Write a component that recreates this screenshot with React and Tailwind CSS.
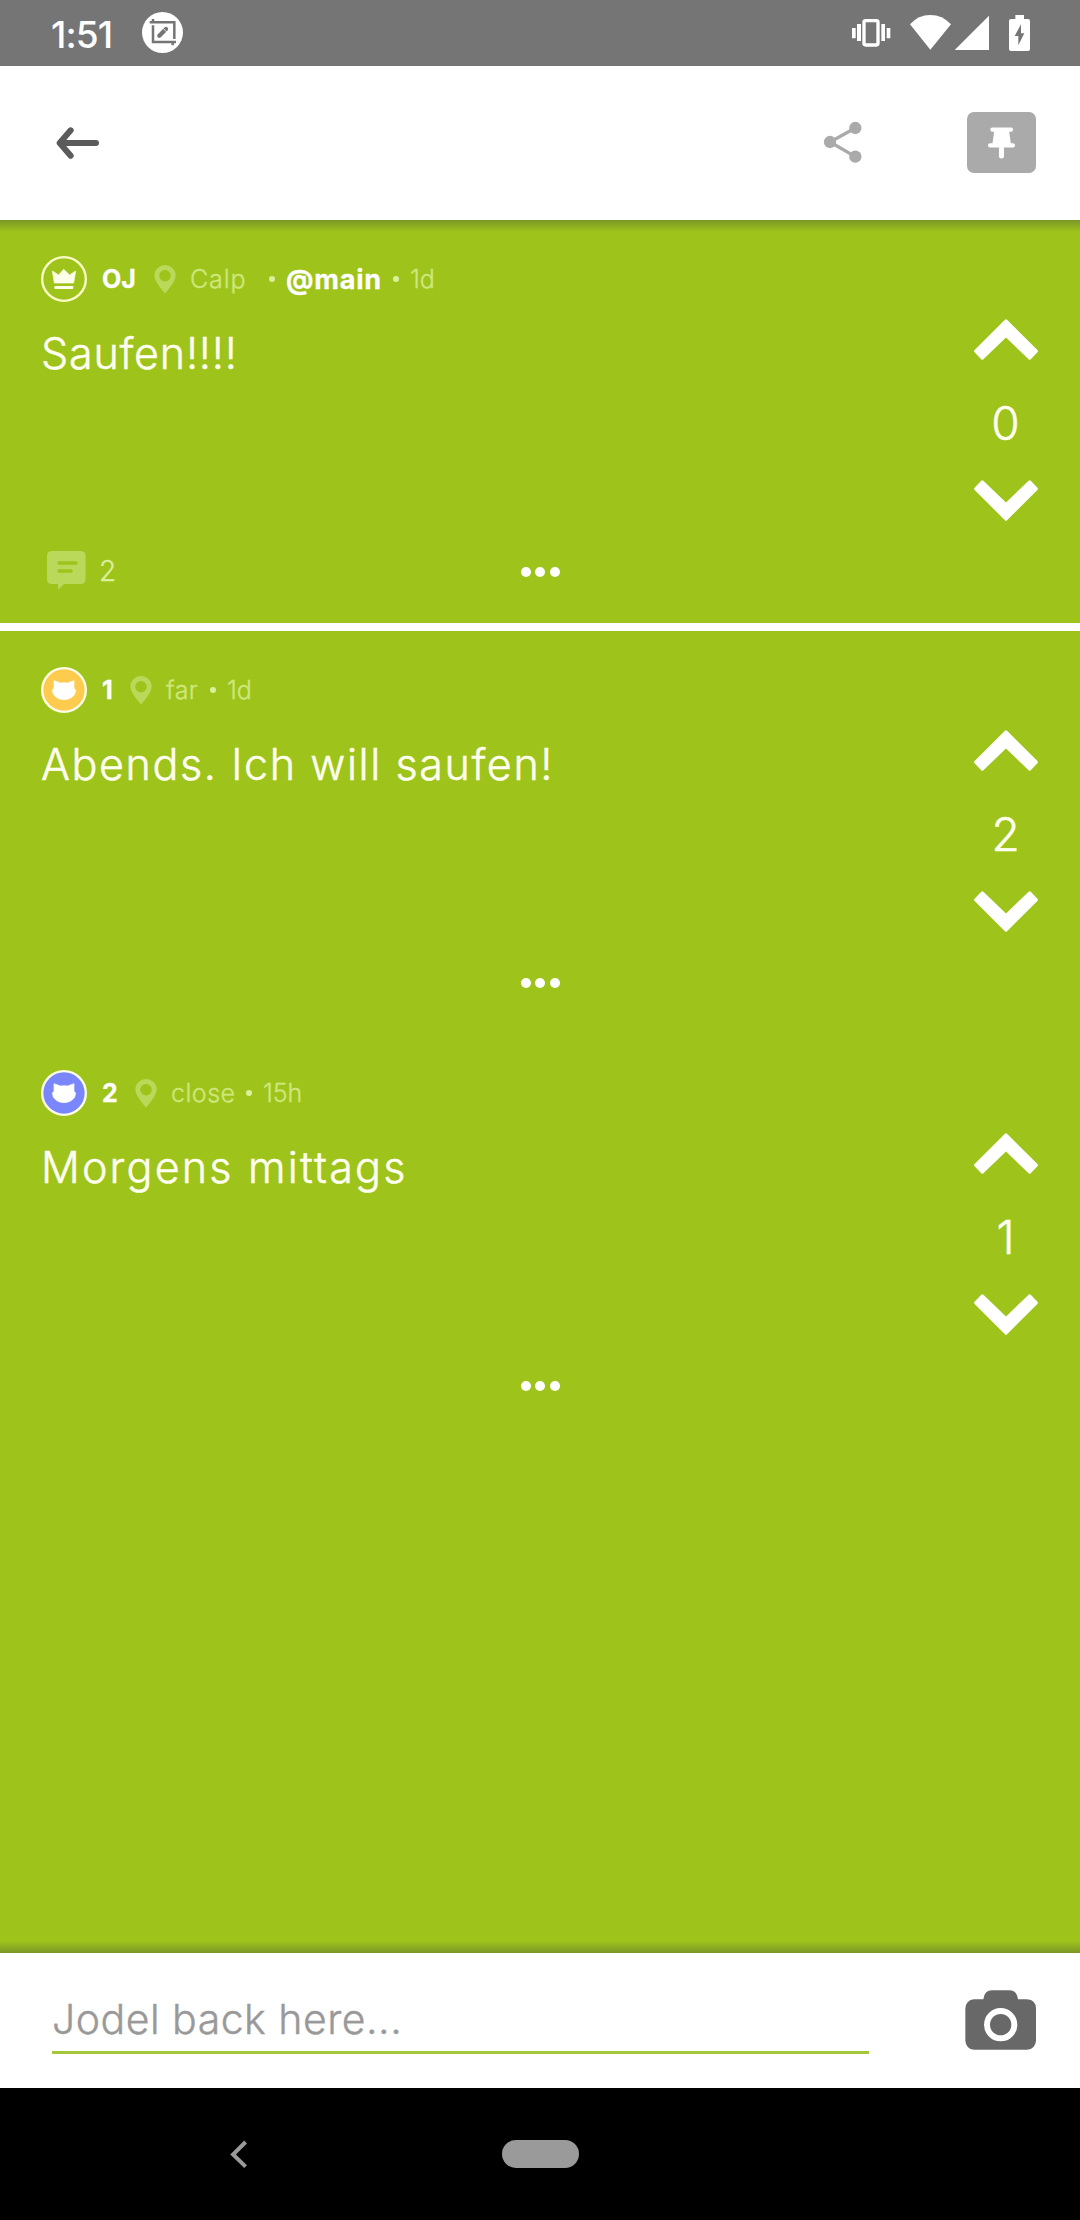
import React from "react";

const posts = [
  {
    avatar: "crown",
    name: "OJ",
    nameClass: "w-[52px]",
    place: "Calp",
    placeClass: "w-[79px] tracking-[0.9px]",
    mention: "@main",
    age: "1d",
    text: "Saufen!!!!",
    textClass: "tracking-[0.8px]",
    votes: "0",
    comments: "2",
  },
  {
    avatar: "#ffcb4f",
    name: "1",
    nameClass: "w-[28px]",
    place: "far",
    placeClass: "w-[44px] tracking-[0.4px]",
    age: "1d",
    text: "Abends. Ich will saufen!",
    textClass: "tracking-[1.6px]",
    votes: "2",
  },
  {
    avatar: "#7a86fb",
    name: "2",
    nameClass: "w-[33px]",
    place: "close",
    placeClass: "w-[75px] tracking-[0.5px]",
    age: "15h",
    text: "Morgens mittags",
    textClass: "tracking-[2.2px]",
    votes: "1",
  },
];

function StatusBar() {
  return (
    <div className="flex h-[66px] shrink-0 items-center bg-[#757575] pl-[51px] pr-[49px] text-white">
      <span className="mt-[3px] w-[91px] text-[37px] leading-none font-medium tracking-[-0.9px]">1:51</span>
      <svg viewBox="426 36 123 123" className="-mt-px h-[41px] w-[41px]">
        <circle cx="487.500" cy="97.500" r="61.500" fill="#fff" />
        <g fill="none" stroke="#757575" strokeWidth="7.500">
          <path d="M449 67H523V117M459 76V126H528M459 57V67M518 126V136" />
        </g>
        <path d="M478 107L498 87" stroke="#757575" strokeWidth="13" strokeLinecap="round" />
        <path d="M488 84L501 97" stroke="#fff" strokeWidth="2.500" />
      </svg>
      <div className="grow" />
      <svg viewBox="270 0 126 198" className="h-[66px] w-[42px]" fill="#fff">
        <rect x="312" y="62" width="42" height="73" rx="5" fill="none" stroke="#fff" strokeWidth="10" />
        <path d="M291 72h12v51h-12zM276 84h11v31h-11zM364 72h11v51h-11zM380 84h11v31h-11z" />
      </svg>
      <svg viewBox="447 0 129 198" className="ml-[17px] h-[66px] w-[43px]" fill="#fff">
        <path d="M450 73Q475 45 511 45T573 73L511 149Z" />
      </svg>
      <svg viewBox="582 0 108 198" className="ml-[2px] h-[66px] w-[36px]" fill="#fff">
        <path d="M584 150L687 47V150Z" />
      </svg>
      <svg viewBox="744 0 69 198" className="ml-[18px] h-[66px] w-[23px]" fill="#fff">
        <rect x="747" y="57" width="63" height="96" rx="6" />
        <path d="M766 45h26v14h-26z" />
        <path d="M783 73L764 108H775V136L793 100H783Z" fill="#757575" />
      </svg>
    </div>
  );
}

function Header() {
  return (
    <div className="flex h-[154px] shrink-0 items-center bg-white pr-[44px] pl-[56px]">
      <svg viewBox="168 378 132 102" className="h-[34px] w-[44px]" fill="none" stroke="#5b5b5b" strokeWidth="18" strokeLinecap="round" strokeLinejoin="round">
        <path d="M288 429H182M212 391L179 429L212 467" />
      </svg>
      <div className="grow" />
      <svg viewBox="189 362 117 126" className="-mt-[2px] h-[42px] w-[39px]" fill="#aaa">
        <path d="M286 383L210 425L286 469" fill="none" stroke="#aaa" strokeWidth="10" />
        <circle cx="210" cy="425" r="18.500" />
        <circle cx="286" cy="383" r="18.500" />
        <circle cx="286" cy="469" r="18.500" />
      </svg>
      <div className="-mt-px ml-[105px] flex h-[61px] w-[69px] items-center justify-center rounded-[7px] bg-[#aaa]">
        <svg viewBox="684 380 81 95" className="h-[32px] w-[27px]" fill="#fff">
          <rect x="691" y="381" width="68" height="13" rx="6" />
          <path d="M703 390H747L753 432H697Z" />
          <rect x="684" y="428" width="81" height="13" rx="6" />
          <rect x="717" y="436" width="15" height="38" rx="7" />
        </svg>
      </div>
    </div>
  );
}

function Avatar({ kind }) {
  if (kind === "crown") {
    return (
      <svg viewBox="125 79 138 138" className="h-[46px] w-[46px]" fill="#fdfee8">
        <circle cx="194" cy="148" r="65.500" fill="none" stroke="#fafcc8" strokeWidth="7" />
        <path d="M159 124L178 136L193 119L211 136L229 124L223 160H165Z" stroke="#fdfee8" strokeWidth="2" strokeLinejoin="round" />
        <rect x="165" y="169" width="57" height="9" rx="3" />
      </svg>
    );
  }
  return (
    <svg viewBox="125 61 138 138" className="h-[46px] w-[46px]">
      <circle cx="194" cy="130" r="65.500" fill={kind} stroke="#fdfee8" strokeWidth="7" />
      <path
        d="M164 102L183 109Q194 107 205 109L224 102V125L229 130L226 143Q214 159 194 159T162 143L159 130L164 125Z"
        fill="#fff"
        stroke="#fff"
        strokeWidth="2"
        strokeLinejoin="round"
      />
    </svg>
  );
}

function PlacePin() {
  return (
    <svg viewBox="404 86 67 88" className="h-[29px] w-[22px]">
      <path
        fillRule="evenodd"
        fill="#bad95b"
        d="M437.500 173Q405 136 405 118A32.500 32 0 0 1 470 118Q470 136 437.500 173ZM437.500 101a17.500 17.500 0 1 0 .01 0Z"
      />
    </svg>
  );
}

function Bullet({ className }) {
  return <span className={"h-[6px] w-[6px] rounded-full bg-[#dcef9f] " + className} />;
}

function Arrow({ down }) {
  return (
    <svg viewBox="101 89 192 122" className={"h-[41px] w-[64px]" + (down ? " rotate-180" : "")}>
      <path d="M197 94L288 185L268 206L197 138L126 206L106 185Z" fill="#fff" stroke="#fff" strokeWidth="9" strokeLinejoin="round" />
    </svg>
  );
}

function Post({ post }) {
  return (
    <article className="flex h-[403px] shrink-0 flex-col">
      <div className="flex h-[328px]">
        <div className="flex grow flex-col pt-9 pl-[41px]">
          <div className="flex h-[46px] items-center text-[25px] leading-none font-light text-[#d0e77f] [-webkit-text-stroke:0.3px]">
            <Avatar kind={post.avatar} />
            <span className={"ml-[15px] font-bold text-white " + post.nameClass}>{post.name}</span>
            <PlacePin />
            <span className={"ml-[14px] whitespace-nowrap " + post.placeClass}>{post.place}</span>
            {post.mention && (
              <>
                <Bullet className="mr-[11px]" />
                <span className="w-[107px] text-[27px] font-bold tracking-[0.8px] text-white">{post.mention}</span>
              </>
            )}
            <Bullet className="mr-[11px]" />
            <span className="tracking-[-0.1px]">{post.age}</span>
          </div>
          <p className={"mt-6 text-[43px] leading-[54px] font-light whitespace-nowrap text-[#fefff0] [-webkit-text-stroke:0.5px] " + post.textClass}>{post.text}</p>
        </div>
        <div className="flex w-[149px] flex-col items-center pt-[99px]">
          <Arrow />
          <span className="flex h-[120px] items-center pt-[6px] text-[46px] font-light text-[#fefff0] [-webkit-text-stroke:0.5px]">{post.votes}</span>
          <Arrow down />
        </div>
      </div>
      <div className="grid h-12 grid-cols-[1fr_auto_1fr] items-center px-[47px]">
        <div className="-mt-[5px] flex items-center">
          {post.comments && (
            <>
              <svg viewBox="0 0 39 38" className="h-[38px] w-[39px]">
                <path d="M5 0H33.500Q38.500 0 38.500 5V28Q38.500 33 33.500 33H17L11 38.500V33H5Q0 33 0 28V5Q0 0 5 0Z" fill="#bad95b" />
                <path d="M12 12H29M12 20H24" stroke="#9ec41b" strokeWidth="3.500" strokeLinecap="round" />
              </svg>
              <span className="mt-[3px] ml-[13px] text-[28px] leading-none font-light text-[#dcef9f] [-webkit-text-stroke:0.3px]">{post.comments}</span>
            </>
          )}
        </div>
        <div className="flex gap-[4.5px]">
          <span className="h-[10px] w-[10px] rounded-full bg-white" />
          <span className="h-[10px] w-[10px] rounded-full bg-white" />
          <span className="h-[10px] w-[10px] rounded-full bg-white" />
        </div>
        <div />
      </div>
    </article>
  );
}

export default function App() {
  return (
    <div className="flex h-[2220px] w-[1080px] flex-col overflow-hidden bg-white font-['Inter',sans-serif]">
      <StatusBar />
      <Header />
      <main className="relative flex grow flex-col bg-[#9ec41b]">
        <div className="absolute inset-x-0 top-0 h-3 bg-linear-to-b from-[#7b9826] to-[#9ec41b]" />
        <Post post={posts[0]} />
        <div className="h-2 shrink-0 bg-white" />
        <Post post={posts[1]} />
        <Post post={posts[2]} />
        <div className="absolute inset-x-0 bottom-0 h-3 bg-linear-to-t from-[#7b9826] to-[#9ec41b]" />
      </main>
      <div className="flex h-[135px] shrink-0 items-start bg-white pl-[52px]">
        <div className="mt-[39px] h-[62px] w-[817px] border-b-[3px] border-[#a5c73a] text-[41px] leading-[54px] font-light tracking-[0.5px] text-[#999] [-webkit-text-stroke:0.4px]">
          Jodel back here...
        </div>
        <svg viewBox="375 180 213 180" className="mt-[37px] ml-[96px] h-[60px] w-[71px]">
          <path
            d="M402 208H430Q433 181 456 181H508Q531 181 534 208H561Q588 210 588 236V332Q586 357 561 359H402Q378 357 376 332V236Q378 210 402 208Z"
            fill="#686868"
          />
          <circle cx="482" cy="284" r="41" fill="none" stroke="#fff" strokeWidth="18" />
        </svg>
      </div>
      <nav className="flex h-[132px] shrink-0 items-center bg-black pl-[230px]">
        <svg viewBox="690 630 54 88" className="h-[29px] w-[18px]" fill="none" stroke="#9a9a9a" strokeWidth="12">
          <path d="M737 636L699 674L737 711" />
        </svg>
        <span className="ml-[254px] h-[28px] w-[77px] rounded-full bg-[#9a9a9a]" />
      </nav>
    </div>
  );
}
